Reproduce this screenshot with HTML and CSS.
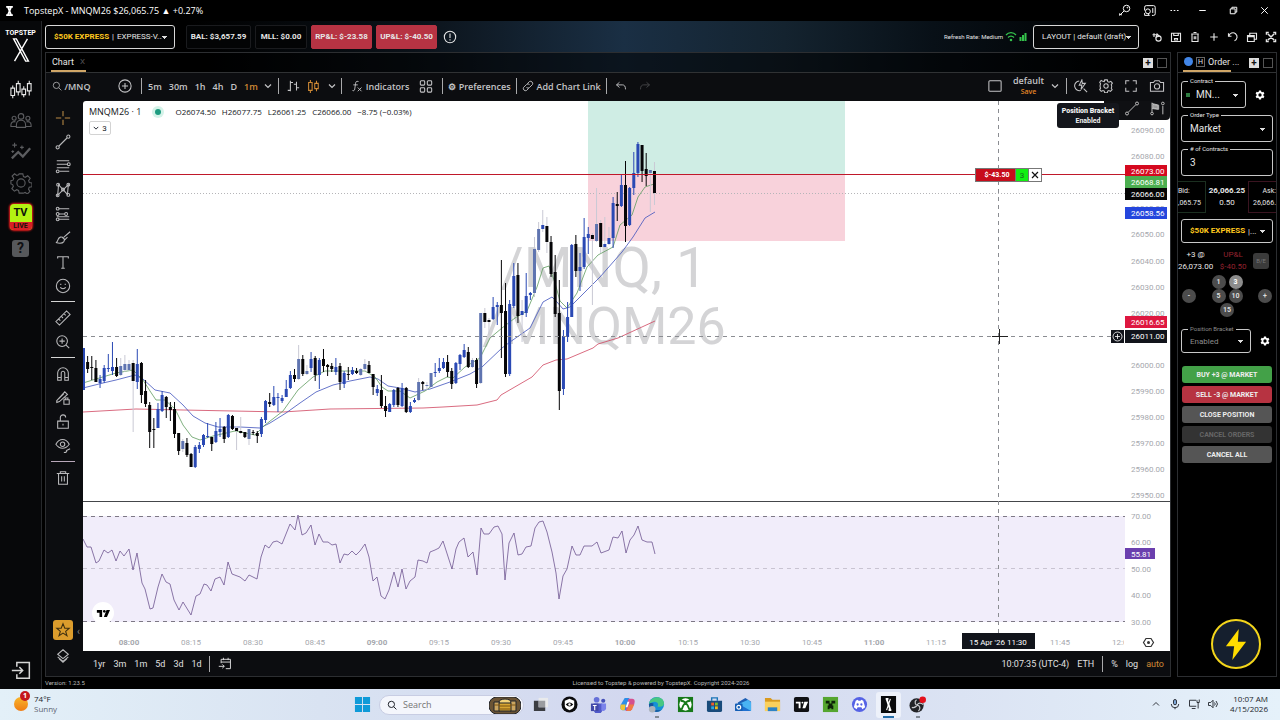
FILE: index.html
```html
<!DOCTYPE html>
<html lang="en">
<head>
    <meta charset="UTF-8">
    <meta name="viewport" content="width=device-width, initial-scale=1.0">
    <title>TopstepX - MNQM26</title>
    <link rel="stylesheet" href="styles.css">
</head>
<body>
    <header class="titlebar">
        <svg class="app-mark" viewBox="0 0 10 12"><path d="M1 1h8M1 11h8M3 1l4 10M7 1L3 11" stroke-width="2"/></svg>
        <span class="title">TopstepX - MNQM26 $26,065.75 ▲ +0.27%</span>
        <div class="window-buttons">
            <button aria-label="Passwords"><svg viewBox="0 0 16 16"><circle cx="10.500" cy="5.500" r="4"/><path d="M7.500 8.500L2 14v-2.500M4 12v2"/><circle cx="11.500" cy="4.500" r=".5"/></svg></button>
            <button aria-label="Side panel"><svg viewBox="0 0 16 16"><path d="M2 8V4a2 2 0 012-2h9a2 2 0 012 2v8a2 2 0 01-2 2h-2M12 5v6"/><circle cx="6" cy="9" r="3"/><path d="M2 11v3h6l-2-2"/></svg></button>
            <button aria-label="More"><svg viewBox="0 0 16 16"><path d="M3 8h2M7 8h2M11 8h2"/></svg></button>
            <button class="wide" aria-label="Minimize"><svg viewBox="0 0 16 16"><path d="M4 8h8"/></svg></button>
            <button class="wide" aria-label="Restore"><svg viewBox="0 0 16 16"><path d="M4 6h6v6H4zM6 6V4h6v6h-2"/></svg></button>
            <button class="wide" aria-label="Close"><svg viewBox="0 0 16 16"><path d="M4 4l8 8M12 4l-8 8"/></svg></button>
        </div>
    </header>

    <div class="app">
        <nav class="sidebar">
            <a class="logo" href="#">TOPSTEP
                <svg viewBox="0 0 18 26"><path d="M1 1h3l13 24h-3zM16 1L2 25"/></svg>
            </a>
            <a class="active" href="#" aria-label="Trade"><svg viewBox="0 0 24 24"><path d="M1 10h4v8H1zM3 7v3m0 8v3M7 5h4v9H7zM9 2v3m0 9v4M13 11h4v6h-4zM15 8v3m0 6v3M19 5h4v8h-4zM21 2v3m0 8v5"/></svg></a>
            <a href="#" aria-label="Community"><svg viewBox="0 0 24 24"><circle cx="12" cy="7" r="3"/><circle cx="4.500" cy="9" r="2.200"/><circle cx="19.500" cy="9" r="2.200"/><path d="M7 19v-3a5 5 0 0110 0v3zM7 18H1v-2a3.500 3.500 0 015-3M17 18h6v-2a3.500 3.500 0 00-5-3"/></svg></a>
            <a href="#" aria-label="Performance"><svg viewBox="0 0 24 24"><path d="M2 19l7-7 5 5 8-9" stroke-width="2.500"/><path d="M5 2v5M2.500 4.500h5M13 5v4M11 7h4M3 10v3M1.500 11.500h3"/></svg></a>
            <a href="#" aria-label="Settings"><svg viewBox="0 0 24 24"><circle cx="12" cy="12" r="4.500"/><path d="M10 2h4l.7 3 2 .8 2.600-1.700 2.700 2.700-1.700 2.600.8 2 2.900.6v4l-3 .7-.8 2 1.500 2.500-2.700 2.700-2.500-1.600-2 .8L14 23h-4l-.7-2.900-2-.8-2.500 1.600L2 18.300l1.700-2.600-.8-2L1 13V9.500l2.300-.6.8-2L2.300 4.500 5 2l2.300 1.800 2-.8z"/></svg></a>
            <a class="tv-live" href="#"><b>TV</b><small>LIVE</small></a>
            <a class="help" href="#" aria-label="Help"><span>?</span></a>
            <a class="logout" href="#" aria-label="Log out"><svg viewBox="0 0 24 24"><path d="M7 8V3h15v19H7v-5M1 12.500h13M10 8.500l4 4-4 4" stroke-width="1.800"/></svg></a>
        </nav>

        <div class="workspace">
            <div class="account-bar">
                <div class="picker account">
                    <label for="account">$50K EXPRESS</label><i>|</i>
                    <select id="account"><option>EXPRESS-V...</option></select>
                </div>
                <span class="stat balance">BAL: $3,657.59</span>
                <span class="stat limit">MLL: $0.00</span>
                <span class="stat loss">RP&amp;L: $-23.58</span>
                <span class="stat loss">UP&amp;L: $-40.50</span>
                <button class="icon-button" aria-label="Account info"><svg viewBox="0 0 16 16"><circle cx="8" cy="8" r="6.500"/><path d="M8 4v5M8 10.500v1.500"/></svg></button>
                <div class="bar-right">
                    <span class="refresh">Refresh Rate: Medium</span>
                    <svg class="signal" viewBox="0 0 22 12"><path d="M1 4a6.500 6.500 0 0110 0M3 6.500a4 4 0 016 0"/><circle cx="6" cy="9" r=".7"/><path d="M15.500 6v4M18 4v6M20.500 2v8" stroke-width="2"/></svg>
                    <div class="picker layout-picker">
                        <select aria-label="Layout"><option>LAYOUT | default (draft)</option></select>
                    </div>
                    <div class="layout-tools">
                        <button aria-label="Link"><svg viewBox="0 0 16 16"><path d="M4 3v5M2 5h5M8 4l3 3-4 1z"/><circle cx="10" cy="10" r="3.500"/></svg></button>
                        <button aria-label="Save"><svg viewBox="0 0 16 16"><path d="M2 3h12v11H2zM5 3v3h6V3M6 10h4v2H6z"/></svg></button>
                        <button aria-label="Delete"><svg viewBox="0 0 16 16"><path d="M3 4h10M6 2h4M4 4v10h8V4M7 7v4M9 7v4"/></svg></button>
                        <button aria-label="Add"><svg viewBox="0 0 16 16"><path d="M8 3v10M3 8h10"/></svg></button>
                        <button aria-label="Reset"><svg viewBox="0 0 16 16"><path d="M2 3v4h4M2.500 7A5.500 5.500 0 1110 13"/></svg></button>
                        <button aria-label="Windows"><svg viewBox="0 0 16 16"><path d="M2 6h9v8H2zM2 7.500h9M5 6V3h9v8h-3" /></svg></button>
                        <button aria-label="Expand"><svg viewBox="0 0 16 16"><path d="M2 5V2h3M11 2h3v3M14 11v3h-3M5 14H2v-3M4 4l8 8M12 4l-8 8" stroke-width="2"/></svg></button>
                    </div>
                </div>
            </div>

            <div class="panels">
                <main class="panel chart-panel">
                    <div class="tabs">
                        <button class="tab">Chart <span>X</span></button>
                        <button class="tab-add" aria-label="Add tab">+</button>
                        <button class="tab-max" aria-label="Maximize"></button>
                    </div>
                    <div class="toolbar">
                        <button class="symbol"><svg viewBox="0 0 16 16"><circle cx="7" cy="7" r="5"/><path d="M11 11l4 4"/></svg>/MNQ</button>
                        <button class="compare" aria-label="Compare"><svg viewBox="0 0 16 16"><circle cx="8" cy="8" r="7"/><path d="M8 4.500v7M4.500 8h7"/></svg></button>
                        <i class="sep"></i>
                        <div class="intervals">
                            <button>5m</button><button>30m</button><button>1h</button><button>4h</button><button>D</button><button class="on">1m</button>
                        </div>
                        <button class="chev" aria-label="Intervals"><svg viewBox="0 0 8 8"><path d="M1 2.500l3 3 3-3"/></svg></button>
                        <i class="sep"></i>
                        <button class="kind" aria-label="Bars"><svg viewBox="0 0 16 16"><path d="M5 2v12M2 13h3M5 4h3M12 3v10M9 6h3M12 10h3"/></svg></button>
                        <button class="kind on" aria-label="Candles"><svg viewBox="0 0 16 16"><path d="M3 4h4v9H3zM5 1v3M5 13v3M10 5h4v6h-4zM12 2v3M12 11v3"/></svg></button>
                        <button class="chev" aria-label="Chart types"><svg viewBox="0 0 8 8"><path d="M1 2.500l3 3 3-3"/></svg></button>
                        <i class="sep"></i>
                        <button class="fx"><svg viewBox="0 0 16 16"><path d="M10 2C7 1 6 3 6 5l-1 7c0 2-2 3-3 2M3 6.500h6M9 10l5 5M14 10l-5 5"/></svg>Indicators</button>
                        <button class="grid" aria-label="Templates"><svg viewBox="0 0 16 16"><rect x="1.500" y="2" width="5" height="5" rx="1"/><rect x="9.500" y="2" width="5" height="5" rx="1"/><rect x="1.500" y="10" width="5" height="5" rx="1"/><rect x="9.500" y="10" width="5" height="5" rx="1"/></svg></button>
                        <i class="sep"></i>
                        <button class="prefs">⚙ Preferences</button>
                        <i class="sep"></i>
                        <button class="link"><svg viewBox="0 0 16 16"><path d="M7 5l3-3a3 3 0 014 4l-4 4a3 3 0 01-4 0M9 11l-3 3a3 3 0 01-4-4l4-4a3 3 0 014 0"/></svg>Add Chart Link</button>
                        <i class="sep"></i>
                        <button class="history" aria-label="Undo"><svg viewBox="0 0 16 16"><path d="M6 3L2 6.500 6 10M2 6.500h8q4 0 4 6"/></svg></button>
                        <button class="history off" aria-label="Redo"><svg viewBox="0 0 16 16"><path d="M10 3l4 3.500-4 3.500M14 6.500H6q-4 0-4 6"/></svg></button>
                        <div class="toolbar-right">
                            <button class="box" aria-label="Layout"><svg viewBox="0 0 16 16"><rect x="1" y="2" width="14" height="12" rx="1"/></svg></button>
                            <button class="saved"><span>default</span><small>Save</small></button>
                            <button class="chev" aria-label="Layouts"><svg viewBox="0 0 8 8"><path d="M1 2.500l3 3 3-3"/></svg></button>
                            <i class="sep"></i>
                            <button aria-label="Quick search"><svg viewBox="0 0 16 16"><path d="M6 2.300A5.500 5.500 0 108 13M11 11l4 4M9 1L6 7h3l-1 5 5-7H9.500z"/></svg></button>
                            <button aria-label="Chart settings"><svg viewBox="0 0 16 16"><circle cx="8" cy="8" r="2.500"/><path d="M6.500 1h3l.5 2 1.500.7 2-1 1.800 2-1.300 1.800.5 1.500v1l-.5 1.500 1 1.700-1.900 2-1.800-1-1.300.6-.5 2h-3L6 13.800l-1.500-.6-2 1-1.700-2 1-1.800L1.300 9V7l.5-1.500-1-1.800 1.700-2 2 1L6 3z"/></svg></button>
                            <button aria-label="Fullscreen"><svg viewBox="0 0 16 16"><path d="M2 6V2h4M10 2h4v4M14 10v4h-4M6 14H2v-4"/></svg></button>
                            <button class="camera" aria-label="Snapshot"><svg viewBox="0 0 18 16"><path d="M1.500 4H5l1.500-2h5L13 4h3.500v10h-15z"/><circle cx="9" cy="8.500" r="3"/></svg></button>
                        </div>
                    </div>
                    <div class="chart-body">
                        <div class="draw-tools">
                            <button class="on" aria-label="Cross"><svg viewBox="0 0 18 18"><path d="M9 1v6M9 11v6M1 9h6M11 9h6"/></svg></button>
                            <button aria-label="Trend line"><svg viewBox="0 0 18 18"><circle cx="3" cy="15" r="1.800"/><circle cx="15" cy="3" r="1.800"/><path d="M4.500 13.500l9-9"/></svg></button>
                            <button aria-label="Fibonacci"><svg viewBox="0 0 18 18"><path d="M2 3h14M2 7h12M2 11h14M5 15h11"/><circle cx="15.500" cy="7" r="1.600"/><circle cx="3" cy="15" r="1.600"/></svg></button>
                            <button aria-label="Patterns"><svg viewBox="0 0 18 18"><path d="M3 15L4 3l10 11 1-11L4 14z"/><circle cx="3.500" cy="3" r="1.600"/><circle cx="15" cy="3" r="1.600"/><circle cx="3" cy="15" r="1.600"/><circle cx="15" cy="14.500" r="1.600"/><circle cx="9" cy="8.500" r="1.600"/></svg></button>
                            <button aria-label="Prediction"><svg viewBox="0 0 18 18"><path d="M4 3h12M4 9h7M2 12h14M4 15h12"/><circle cx="3" cy="3" r="1.600"/><circle cx="3" cy="9" r="1.600"/><circle cx="12.500" cy="9" r="1.600"/><circle cx="3" cy="15" r="1.600"/></svg></button>
                            <button aria-label="Brush"><svg viewBox="0 0 18 18"><path d="M1 14c3 0 1-5 5-6 3-.5 6 2 4 5-2 2.500-6 2-9 1zM10 8l7-6M8 8l3 3 3-3"/></svg></button>
                            <button aria-label="Text"><svg viewBox="0 0 18 18"><path d="M3 5V3h12v2M9 3v13M7 16h4"/></svg></button>
                            <button aria-label="Icons"><svg viewBox="0 0 18 18"><circle cx="9" cy="9" r="7.500"/><path d="M6 10.500c1 2 5 2 6 0M6.500 6.500v1.500M11.500 6.500v1.500"/></svg></button>
                            <i></i>
                            <button aria-label="Measure"><svg viewBox="0 0 18 18"><path d="M1 13L13 1l4 4L5 17zM4 10l2 2M7 7l2 2M10 4l2 2"/></svg></button>
                            <button aria-label="Zoom in"><svg viewBox="0 0 18 18"><circle cx="8" cy="8" r="6"/><path d="M12.500 12.500L16 16M8 5v6M5 8h6"/></svg></button>
                            <i></i>
                            <button aria-label="Magnet"><svg viewBox="0 0 18 18"><path d="M3 16V8a6 6 0 0112 0v8h-4V8a2 2 0 00-4 0v8zM3 13h4M11 13h4"/></svg></button>
                            <button aria-label="Stay in drawing mode"><svg viewBox="0 0 18 18"><path d="M2 12L11 2l3 3-9 8-3 1zM4 10l6-6M10 11h6v5h-6zM11.500 11V9h3v2"/></svg></button>
                            <button aria-label="Lock drawings"><svg viewBox="0 0 18 18"><path d="M3 8h12v8H3zM6 8V4a3 3 0 016 0M9 11v2"/></svg></button>
                            <button aria-label="Hide drawings"><svg viewBox="0 0 18 18"><path d="M1 7c4-7 11-7 15 0-4 6-11 6-15 0zM10 16c2 1 4-1 3-2l4-2"/><circle cx="8.500" cy="7" r="2.500"/></svg></button>
                            <i class="tinted"></i>
                            <button aria-label="Remove drawings"><svg viewBox="0 0 18 18"><path d="M2 4h14M6 4V2h6v2M4 4v12h10V4M7.500 7v6M10.500 7v6"/></svg></button>
                            <button class="star" aria-label="Favorites"><svg viewBox="0 0 18 18"><path d="M9 2l2 5h5l-4 3.500 1.500 5L9 12.500l-4.500 3 1.500-5L2 7h5z"/></svg></button>
                            <button aria-label="Object tree"><svg viewBox="0 0 18 18"><path d="M9 2l6 5-6 5-6-5zM3 10l6 5 6-5M4.500 12l4.500 4 4.500-4"/></svg></button>
                        </div>
                        <div class="chart-main">
                            <div class="plot">
                                <svg id="chart" viewBox="83 101 1087 550" preserveAspectRatio="xMinYMin meet"></svg>
                                <div class="legend">
                                    <strong>MNQM26 · 1</strong><i class="dot"></i>
                                    <span>O26074.50</span><span>H26077.75</span><span>L26061.25</span><span>C26066.00</span><span>−8.75 (−0.03%)</span>
                                </div>
                                <button class="count"><svg viewBox="0 0 8 8"><path d="M1 2.500l3 3 3-3"/></svg>3</button>
                                <div class="float-tools">
                                    <svg viewBox="0 0 18 18"><circle cx="3" cy="15" r="1.800"/><circle cx="15" cy="3" r="1.800"/><path d="M4.500 13.500l9-9"/></svg>
                                    <svg viewBox="0 0 18 18"><path d="M3 2v11M3 3l8 2v5l-8-1M16 6v10"/><path d="M4 4l6 1.500v4L4 8.500z" fill="#999"/><circle cx="3" cy="15" r="1.600"/><circle cx="16" cy="3" r="1.600"/></svg>
                                </div>
                                <div class="tooltip"><b>Position Bracket</b><span>Enabled</span></div>
                                <button class="collapse" aria-label="Collapse tools">‹</button>
                                <div class="tv-mark"><svg viewBox="0 0 16 10"><path d="M1 1h6v8H4V4H1zM12 1h4l-3.500 8H9z"/><circle cx="9.500" cy="2.500" r="1.500"/></svg></div>
                            </div>
                            <div class="range-bar">
                                <div class="ranges"><button>1yr</button><button>3m</button><button>1m</button><button>5d</button><button>3d</button><button>1d</button></div>
                                <i class="sep"></i>
                                <button class="goto" aria-label="Go to date"><svg viewBox="0 0 18 18"><path d="M4 8V3h12v12h-6M4 6.500h12M7 1v3M13 1v3M1 12h7M5.500 9.500L8 12l-2.500 2.500"/></svg></button>
                                <div class="range-right">
                                    <button>10:07:35 (UTC-4)</button><button>ETH</button><i class="sep"></i><button>%</button><button>log</button><button class="on">auto</button>
                                </div>
                            </div>
                        </div>
                    </div>
                </main>

                <aside class="panel order-panel">
                    <div class="tabs">
                        <button class="tab"><i class="ball"></i><i class="h">H</i>Order ...</button>
                        <button class="tab-add" aria-label="Add tab">+</button>
                        <button class="tab-max" aria-label="Maximize"></button>
                    </div>
                    <form class="order">
                        <div class="field-row">
                            <div class="field contract"><label for="contract">Contract</label><i class="live"></i><select id="contract"><option>MN...</option></select></div>
                            <button type="button" class="gear" aria-label="Contract settings"><svg viewBox="0 0 24 24"><use href="#cog"/></svg></button>
                        </div>
                        <div class="field"><label for="type">Order Type</label><select id="type"><option>Market</option></select></div>
                        <div class="field"><label for="qty"># of Contracts</label><input id="qty" type="text" value="3"></div>
                        <div class="quotes">
                            <div class="bid"><span>Bid:</span><span>,065.75</span></div>
                            <div class="last"><b>26,066.25</b><span>0.50</span></div>
                            <div class="ask"><span>Ask:</span><span>26,066.</span></div>
                        </div>
                        <div class="field order-account"><label for="acct2">$50K EXPRESS</label><select id="acct2"><option>|...</option></select></div>
                        <div class="position">
                            <div><span>+3 @</span><span>26,073.00</span></div>
                            <div class="neg"><span>UP&amp;L</span><span>$-40.50</span></div>
                            <button type="button" disabled>B/E</button>
                        </div>
                        <div class="sizes">
                            <button type="button">-</button>
                            <div><button type="button">1</button><button type="button" class="on">3</button><button type="button">5</button><button type="button">10</button><button type="button">15</button></div>
                            <button type="button">+</button>
                        </div>
                        <div class="field-row">
                            <div class="field bracket"><label for="bracket">Position Bracket</label><select id="bracket"><option>Enabled</option></select></div>
                            <button type="button" class="gear" aria-label="Bracket settings"><svg viewBox="0 0 24 24"><use href="#cog"/></svg></button>
                        </div>
                        <div class="actions">
                            <button type="button" class="buy">BUY +3 @ MARKET</button>
                            <button type="button" class="sell">SELL -3 @ MARKET</button>
                            <button type="button">CLOSE POSITION</button>
                            <button type="button" disabled>CANCEL ORDERS</button>
                            <button type="button">CANCEL ALL</button>
                        </div>
                    </form>
                    <button class="bolt" aria-label="Quick trade"><svg viewBox="0 0 24 36"><path d="M15 1L1 20h9L8 35l15-20h-9z"/></svg></button>
                </aside>
            </div>
            <footer class="app-footer"><span>Version: 1.23.5</span><span>Licensed to Topstep &amp; powered by TopstepX. Copyright 2024-2026</span><span></span></footer>
        </div>
    </div>

    <footer class="taskbar">
        <div class="weather">
            <div class="sun"><b>1</b></div>
            <p>74°F<br><span>Sunny</span></p>
        </div>
        <div class="dock">
            <a href="#" aria-label="Start"><svg viewBox="0 0 18 18"><path fill="#0f9ad8" d="M1 1h7.500v7.500H1zM9.500 1H17v7.500H9.500zM1 9.500h7.500V17H1zM9.500 9.500H17V17H9.500z"/></svg></a>
            <div class="search">
                <svg viewBox="0 0 16 16"><circle cx="7" cy="7" r="5"/><path d="M10.500 10.500L15 15"/></svg>
                <input type="text" placeholder="Search" aria-label="Search">
                <svg class="coins" viewBox="0 0 32 17"><rect width="32" height="17" rx="8" fill="#6b5434"/><path d="M5 5h6v9H5zM21 4h6v10h-6z" fill="#caa560"/><ellipse cx="16" cy="5" rx="6" ry="3" fill="#f3d37a"/><path d="M10 6h12v8H10z" fill="#d6a431"/><path d="M10 9h12M10 12h12M5 8h6M21 8h6" stroke="#7b5312"/></svg>
            </div>
            <a href="#" aria-label="Task view"><svg viewBox="0 0 18 18"><path fill="#e9eaec" d="M7 2h10v10H7z"/><path fill="#3b3d42" d="M2 5h5v7h7v4H2z"/><path fill="#9a9ca0" d="M7 5h7v7H7z"/></svg></a>
            <a href="#" aria-label="Security"><svg viewBox="0 0 18 18"><circle cx="9" cy="9" r="8.500" fill="#0b0b0d"/><path fill="#fff" d="M9 3l5 2v5c0 2-2 4-5 5-3-1-5-3-5-5V5z"/><path d="M5 9q4-4 8 0-4 4-8 0" fill="#0b0b0d"/><circle cx="9" cy="9" r="1.300" fill="#fff"/></svg></a>
            <a href="#" aria-label="Teams"><svg viewBox="0 0 18 18"><circle cx="7" cy="4" r="3" fill="#6670d8"/><circle cx="14" cy="5" r="2.200" fill="#4550b8"/><path d="M4 8h9v6a4 4 0 01-9 1z" fill="#5059c9"/><path d="M12 8h5v5a3 3 0 01-5 2z" fill="#7b83eb"/><path d="M1 8h8v8H1z" fill="#4148a8"/><path d="M3 10h4M5 10v5" stroke="#fff"/></svg></a>
            <a href="#" aria-label="Copilot"><svg viewBox="0 0 18 18"><path d="M6 2h5l-3 13H4c-3 0-3-3-2-6z" fill="#2b8ee8"/><path d="M2 9h5l-1 6H4c-3 0-3-3-2-6z" fill="#efc336"/><path d="M12 16H7l3-13h4c3 0 3 3 2 6z" fill="#d4508f"/><path d="M11 9h5l-2 5-2 2H8z" fill="#f07a45"/><path d="M9 6l-2 6h2l2-6z" fill="#fff"/></svg></a>
            <a class="running" href="#" aria-label="Edge"><svg viewBox="0 0 18 18"><circle cx="9" cy="9" r="8" fill="#1691d6"/><path d="M1 9C2-1 17-1 17 8c0 3-4 4-7 3 3-5-5-7-9-2z" fill="#48c783"/><path d="M6 8c-2 5 2 8 8 7-7 4-13 0-13-6 1-2 3-2 5-1z" fill="#16539b"/><circle cx="4.500" cy="14" r="3.500" fill="#aab2bb"/></svg></a>
            <a href="#" aria-label="Xbox"><svg viewBox="0 0 18 18"><path fill="#17791a" d="M1 1h16v16H1z"/><circle cx="9" cy="9" r="6.500" fill="#fff"/><path d="M5 14C6 10 9 7 9 7s3 3 4 7M4 5c3 0 5 2 5 2s2-2 5-2" fill="none" stroke="#17791a" stroke-width="2"/></svg></a>
            <a href="#" aria-label="Store"><svg viewBox="0 0 18 18"><path d="M6 5V2h6v3" fill="none" stroke="#1b76b7" stroke-width="1.500"/><path fill="#194b7b" d="M1 5h16v10q0 2-2 2H3q-2 0-2-2z"/><path fill="#f15b2a" d="M5.500 7h3v3h-3z"/><path fill="#80bb2d" d="M9.500 7h3v3h-3z"/><path fill="#28a8e0" d="M5.500 11h3v3h-3z"/><path fill="#f7bb16" d="M9.500 11h3v3h-3z"/></svg></a>
            <a href="#" aria-label="Outlook"><svg viewBox="0 0 18 18"><path fill="#1d5fb5" d="M3 7l8-5 6 4v9H4z"/><path fill="#49b3f3" d="M5 8l9-4 3 3v9H7z"/><path fill="#1e70d0" d="M5 9l12 7H5z"/><rect y="8" width="8" height="8" rx="1" fill="#145eb5"/><circle cx="4" cy="12" r="2" fill="none" stroke="#fff" stroke-width="1.300"/></svg></a>
            <a href="#" aria-label="Explorer"><svg viewBox="0 0 18 18"><path fill="#d99a20" d="M1 2h6l2 2h8v12H1z"/><path fill="#fbd05c" d="M1 6h16v10H1z"/><path fill="#2d83c6" d="M4 12h10v4H4z"/></svg></a>
            <a href="#" aria-label="TradingView"><svg viewBox="0 0 18 18"><rect x="1" y="1" width="16" height="16" rx="2" fill="#101114"/><path fill="#fff" d="M3 6h5v7H6V8H3zM12 6h4l-3 7h-3z"/><circle cx="10" cy="7" r="1" fill="#fff"/></svg></a>
            <a href="#" aria-label="Minecraft"><svg viewBox="0 0 18 18"><path fill="#55a630" d="M1 1h16v16H1z"/><path fill="#0c2108" d="M4 5h4v3H4zM10 5h4v3h-4zM7 8h4v2h1v4h-2v-1H8v1H6v-4h1z"/></svg></a>
            <a href="#" aria-label="Discord"><svg viewBox="0 0 18 18"><circle cx="9" cy="9" r="8" fill="#5562e5"/><path fill="#fff" d="M5 5l2-1 1 1h2l1-1 2 1 2 7-3 2-1-2H7l-1 2-3-2z"/><circle cx="7" cy="9" r="1.200" fill="#5562e5"/><circle cx="11" cy="9" r="1.200" fill="#5562e5"/></svg></a>
            <a class="current" href="#" aria-label="TopstepX"><svg viewBox="0 0 18 18"><path fill="#08090b" d="M1 0h16v18H1z"/><path stroke="#fff" stroke-width="2" d="M6 3h3M9 15h3M7 3l4 12"/><path stroke="#fff" d="M11 3L7 15"/></svg></a>
            <a class="running" href="#" aria-label="OBS"><svg viewBox="0 0 18 18"><circle cx="8" cy="10" r="7.500" fill="#222327"/><path d="M8 4c-3 2-1 6 1 6s4 3 1 6M3 12c3 1 5-1 6-3s4-2 6 0" fill="none" stroke="#c7c8cc" stroke-width="1.300"/><circle cx="14.500" cy="4" r="3.500" fill="#e4101c"/></svg></a>
        </div>
        <div class="tray">
            <svg viewBox="0 0 16 16"><path d="M4 10l4-4 4 4"/></svg>
            <svg viewBox="0 0 16 16"><rect x="6" y="2" width="4" height="7" rx="2" fill="#7fa8d8"/><path d="M3 8a5 5 0 0010 0M8 13v2"/></svg>
            <svg viewBox="0 0 16 16"><path d="M11 3H2v8h9M5 14h5M12 3v3h3V2M13.500 6v8"/></svg>
            <svg viewBox="0 0 16 16"><path d="M2 6h3l3-3v10l-3-3H2zM10 6q2 2 0 4M12 4q4 4 0 8"/></svg>
            <p>10:07 AM<br>4/15/2026</p>
        </div>
    </footer>

    <svg width="0" height="0" class="defs"><symbol id="cog" viewBox="0 0 24 24"><path fill-rule="evenodd" d="M9.500 1h5l.6 3.200 2 1.100 3-1.200 2.400 4.200-2.400 2.200v2.800l2.400 2.200-2.400 4.200-3-1.100-2 1.100-.6 3.300h-5l-.6-3.300-2-1.100-3 1.100-2.400-4.200 2.400-2.200v-2.800L1.500 8.300l2.400-4.200 3 1.200 2-1.100zM12 8a4 4 0 100 8 4 4 0 000-8z"/></symbol></svg>
    <script src="chart.js"></script>
</body>
</html>
```
FILE: styles.css
```css
* {
    box-sizing: border-box;
}
body {
    margin: 0;
    min-height: 100vh;
    display: flex;
    flex-direction: column;
    background: #000;
    color: #e6e6e6;
    font-family: Roboto, sans-serif;
    font-size: 8px;
}
button, select, input {
    font: inherit;
    color: inherit;
    background: none;
    border: 0;
    padding: 0;
    margin: 0;
}
button {
    cursor: pointer;
    white-space: nowrap;
}
a {
    color: inherit;
    text-decoration: none;
}
i {
    font-style: normal;
}
p {
    margin: 0;
}
svg {
    display: block;
    width: 14px;
    height: 14px;
    fill: none;
    stroke: currentColor;
    stroke-width: 1.2;
    flex: none;
}
svg.defs {
    width: 0;
    height: 0;
    position: absolute;
}
/* custom arrow for every drop-down */
select {
    appearance: none;
    flex: 1;
    min-width: 0;
    height: 16px;
    padding-right: 12px;
    background: linear-gradient(#ddd, #ddd) no-repeat right 7px top 7px / 5px 1px,
                linear-gradient(#ddd, #ddd) no-repeat right 8px top 8px / 3px 1px,
                linear-gradient(#ddd, #ddd) no-repeat right 9px top 9px / 1px 1px;
}
select option {
    background: #111;
}

/* window title */
.titlebar {
    height: 21px;
    display: flex;
    align-items: center;
    padding-left: 5px;
    font-family: "Open Sans", sans-serif;
    font-size: 9px;
    color: #fff;
}
.app-mark {
    width: 9px;
    height: 10px;
    margin-right: 10px;
}
.window-buttons {
    margin-left: auto;
    display: flex;
}
.window-buttons button {
    width: 25px;
    display: flex;
    justify-content: center;
}
.window-buttons .wide {
    width: 31px;
}
.window-buttons svg {
    width: 13px;
    height: 13px;
}

.app {
    flex: 1;
    display: flex;
}
.sidebar {
    width: 42px;
    background: #07080a;
    border-right: 1px solid #26282b;
    display: flex;
    flex-direction: column;
    align-items: center;
    gap: 1px;
    color: #5c5d60;
}
.sidebar a {
    height: 30px;
    display: flex;
    align-items: center;
    justify-content: center;
}
.sidebar a svg {
    width: 22px;
    height: 22px;
}
.sidebar .logo {
    height: 53px;
    padding-bottom: 6px;
    flex-direction: column;
    font-weight: bold;
    font-size: 7px;
    line-height: 10px;
    color: #fff;
}
.sidebar .logo svg {
    width: 18px;
    height: 24px;
    stroke-width: 1.5;
}
.sidebar .active {
    color: #e8e8e8;
}
.sidebar .tv-live {
    width: 22px;
    height: 26px;
    margin: 5px 0 2px;
    flex-direction: column;
    background: #b3f312;
    border-radius: 4px;
    box-shadow: 0 0 2px 1px #e41c1c;
    overflow: hidden;
    color: #10150a;
}
.tv-live b {
    font-size: 11px;
    line-height: 18px;
}
.tv-live small {
    width: 100%;
    background: #d81f26;
    font-size: 7px;
    line-height: 8px;
    text-align: center;
    font-weight: bold;
}
.help span {
    width: 17px;
    height: 17px;
    background: #56585b;
    border-radius: 3px;
    color: #101114;
    font: bold 14px/17px Roboto, sans-serif;
    text-align: center;
}
.sidebar .logout {
    margin-top: auto;
    margin-bottom: 4px;
    color: #d6d6d6;
}
.sidebar .logout svg {
    width: 20px;
    height: 20px;
}

.workspace {
    flex: 1;
    min-width: 0;
    display: flex;
    flex-direction: column;
    padding: 0 3px;
    background: linear-gradient(90deg, #000 12%, #0b1219 30%, #1a2f44 47%, #14232f 60%, #081017 72%, #000 88%);
}
.account-bar {
    height: 31px;
    display: flex;
    align-items: center;
    font-weight: bold;
}
.picker {
    display: flex;
    align-items: center;
    height: 24px;
    border: 1px solid #d8d8d8;
    border-radius: 3px;
    padding-left: 8px;
    background: #050607;
}
.account {
    width: 130px;
    margin-right: 11px;
    font-weight: normal;
}
.account label,
.order-account label {
    color: #ffc81f;
    font-weight: bold;
}
.account i {
    margin: 0 3px;
}
.stat {
    width: 61px;
    height: 24px;
    line-height: 22px;
    margin-right: 4px;
    border: 1px solid #1a1b1e;
    border-radius: 2px;
    background: #030405;
    text-align: center;
    white-space: nowrap;
}
.balance {
    width: 65px;
}
.limit {
    width: 52px;
}
.loss {
    background: #b73343;
    border-color: #b73343;
}
.icon-button {
    margin-left: 2px;
}
.bar-right {
    margin-left: auto;
    display: flex;
    align-items: center;
}
.refresh {
    font-size: 6px;
    font-weight: normal;
}
.signal {
    width: 22px;
    height: 12px;
    margin: 0 6px 0 2px;
    color: #35c34c;
}
.layout-picker {
    width: 106px;
    font-weight: normal;
}
.layout-tools {
    display: flex;
    gap: 7px;
    margin-left: 12px;
}
.layout-tools svg {
    width: 12px;
    height: 12px;
    stroke-width: 1.5;
}

.panels {
    flex: 1;
    display: flex;
    gap: 6px;
}
.panel {
    border: 1px solid #2c2e31;
    display: flex;
    flex-direction: column;
    min-width: 0;
    position: relative;
}
.chart-panel {
    flex: 1;
}
.order-panel {
    width: 100px;
    background: #000;
}
.tabs {
    height: 20px;
    display: flex;
    align-items: center;
    border-bottom: 1px solid #303234;
    background: rgba(0, 0, 0, .55);
    padding-right: 3px;
}
.tab {
    height: 19px;
    margin-left: 5px;
    border-bottom: 2px solid #d0a667;
    display: flex;
    align-items: center;
    gap: 6px;
    font-size: 9px;
    padding: 0 1px;
}
.tab span {
    color: #555;
    font-size: 8px;
}
.tab-add {
    margin-left: auto;
    width: 10px;
    height: 10px;
    background: #ddd;
    color: #111;
    font: bold 10px/10px Roboto, sans-serif;
}
.tab-max {
    width: 10px;
    height: 10px;
    border: 1px solid #555;
    margin-left: 4px;
}
.toolbar {
    height: 28px;
    padding-bottom: 2px;
    background: #0c0d10;
    display: flex;
    align-items: center;
    font-family: "Open Sans", sans-serif;
    font-weight: 600;
    font-size: 9px;
    color: #c4c4c6;
}
.toolbar button {
    display: flex;
    align-items: center;
    justify-content: center;
}
.sep {
    width: 1px;
    height: 16px;
    background: #a9a9ab;
}
.on {
    color: #d08a35;
}
.symbol {
    width: 54px;
    margin-right: 18px;
    gap: 3px;
    margin-left: -2px;
}
.toolbar .symbol svg {
    width: 10px;
    height: 10px;
}
.compare {
    width: 18px;
    margin-right: 7px;
}
.intervals {
    display: flex;
    gap: 7px;
    margin-left: 6px;
}
.chev {
    width: 20px;
}
.chev svg {
    width: 8px;
    height: 8px;
}
.kind {
    width: 20px;
}
.kind + .chev {
    width: 18px;
}
.sep + .kind {
    margin-left: 4px;
}
.fx {
    gap: 3px;
    margin: 0 10px 0 9px;
}
.fx svg,
.link svg {
    width: 12px;
    height: 12px;
}
.grid {
    margin-right: 9px;
}
.prefs {
    margin: 0 5px;
}
.link {
    margin: 0 5px;
    gap: 3px;
}
.history {
    margin-left: 8px;
}
.history svg {
    width: 12px;
    height: 12px;
}
.off {
    color: #47484b;
    margin-left: 12px;
}
.toolbar-right {
    margin-left: auto;
    display: flex;
    align-items: center;
    gap: 11px;
    padding-right: 5px;
}
.toolbar-right .chev {
    width: 16px;
    margin: 0 -8px;
}
.toolbar-right .sep {
    margin-right: -4px;
}
.toolbar .saved {
    flex-direction: column;
    line-height: 12px;
}
.saved small {
    font-size: 7px;
    line-height: 10px;
    color: #e28426;
}
.camera svg {
    width: 16px;
}

.chart-body {
    flex: 1;
    display: flex;
    background: #0c0d10;
}
.draw-tools {
    width: 37px;
    display: flex;
    flex-direction: column;
    align-items: center;
    padding: 5px 3px 8px 0;
    color: #b9b9bb;
}
.draw-tools button {
    height: 24px;
    display: flex;
    align-items: center;
}
.draw-tools svg {
    width: 16px;
    height: 16px;
}
.draw-tools i {
    width: 24px;
    height: 1px;
    background: #d5d5d5;
    margin: 3px 0 4px;
}
.draw-tools .tinted {
    background: #b9a8ba;
}
.draw-tools .on {
    color: #b98a45;
}
.draw-tools .star {
    width: 20px;
    height: 20px;
    margin: auto 0 4px;
    justify-content: center;
    border-radius: 3px;
    background: #dc9c2c;
    color: #403010;
}
.chart-main {
    flex: 1;
    min-width: 0;
    display: flex;
    flex-direction: column;
}
.plot {
    flex: 1;
    position: relative;
    background: #fff;
    border-top-left-radius: 3px;
    color: #131722;
}
#chart {
    width: 100%;
    height: auto;
    stroke: none;
    font-family: Roboto, sans-serif;
    font-size: 8px;
}
.legend {
    position: absolute;
    top: 5px;
    left: 6px;
    display: flex;
    align-items: center;
    gap: 6px;
    font: 8px/12px "Open Sans", sans-serif;
}
.legend strong {
    font-size: 9px;
    font-weight: normal;
}
.dot {
    width: 6px;
    height: 6px;
    margin: 0 8px;
    border-radius: 50%;
    background: #1e9c80;
    box-shadow: 0 0 0 3px #d5f3e9;
}
.count {
    position: absolute;
    top: 20px;
    left: 6px;
    width: 22px;
    height: 14px;
    display: flex;
    align-items: center;
    justify-content: center;
    gap: 3px;
    border: 1px solid #d3d3d3;
    border-radius: 2px;
    background: #fff;
    font: 8px Roboto, sans-serif;
}
.count svg {
    width: 6px;
    height: 6px;
}
.float-tools {
    position: absolute;
    top: 0;
    right: 0;
    width: 66px;
    height: 19px;
    padding-right: 5px;
    display: flex;
    justify-content: flex-end;
    gap: 9px;
    background: #0f1013;
    border-bottom-right-radius: 4px;
    color: #bbb;
}
.float-tools svg {
    width: 16px;
    height: 15px;
}
.tooltip {
    position: absolute;
    top: 2px;
    right: 51px;
    width: 62px;
    height: 25px;
    padding-top: 3px;
    display: flex;
    flex-direction: column;
    align-items: center;
    border-radius: 3px;
    background: #14161c;
    color: #f0f0f0;
    font-weight: bold;
    font-size: 7px;
    line-height: 10px;
}
.collapse {
    position: absolute;
    left: -6px;
    bottom: 14px;
    color: #888;
    font-size: 10px;
}
.tv-mark {
    position: absolute;
    left: 9px;
    bottom: 27px;
    width: 22px;
    height: 22px;
    display: flex;
    align-items: center;
    justify-content: center;
    border-radius: 50%;
    background: #fff;
}
.tv-mark svg {
    height: 9px;
    fill: #000;
    stroke: none;
}
.range-bar {
    height: 25px;
    display: flex;
    align-items: center;
    padding: 1px 6px 0 10px;
    font: 9px Roboto, sans-serif;
    color: #e0e0e0;
}
.ranges {
    display: flex;
    gap: 8px;
    margin-right: 7px;
}
.goto {
    margin-left: 8px;
}
.range-right {
    margin-left: auto;
    display: flex;
    align-items: center;
    gap: 8px;
}

/* order ticket */
.order-panel .tab {
    width: 48px;
    gap: 3px;
}
.order-panel .tab-add {
    flex: none;
}
.order-panel .tab-max {
    flex: none;
}
.ball {
    flex: none;
    width: 9px;
    height: 9px;
    border-radius: 50%;
    background: #4286e8;
}
.h {
    border: 1px solid #666;
    font-size: 7px;
    line-height: 8px;
    padding: 0 1px;
}
.order {
    padding: 8px 3px 0;
    display: flex;
    flex-direction: column;
}
.field-row {
    display: flex;
    gap: 9px;
}
.field {
    position: relative;
    height: 27px;
    display: flex;
    align-items: center;
    padding-left: 8px;
    margin-bottom: 7px;
    border: 1px solid #c8c8c8;
    border-radius: 3px;
    font-size: 10px;
}
.field > label {
    position: absolute;
    top: -6px;
    left: 6px;
    padding: 0 2px;
    background: #000;
    font-size: 6px;
    line-height: 10px;
}
.field input {
    width: 100%;
}
.contract {
    width: 65px;
    padding-left: 4px;
    gap: 6px;
}
.live {
    width: 4px;
    height: 4px;
    background: #2f7d42;
}
.gear {
    height: 27px;
}
.gear svg {
    width: 10px;
    height: 10px;
    fill: #fff;
    stroke: none;
}
.quotes {
    display: flex;
    justify-content: space-between;
    height: 32px;
    margin: -2px -3px 6px;
    font-size: 8px;
    line-height: 12px;
}
.quotes div {
    display: flex;
    flex-direction: column;
    padding-top: 3px;
}
.quotes .bid {
    width: 28px;
    align-items: flex-start;
    border: 1px solid #1b2f20;
    border-left: 0;
    font-size: 7px;
}
.quotes .last {
    align-items: center;
    padding-top: 4px;
}
.quotes .ask {
    width: 28px;
    align-items: flex-end;
    border: 1px solid #3a1420;
    border-right: 0;
    font-size: 7px;
}
.order-account {
    height: 24px;
    font-size: 8px;
}
.order-account > label {
    position: static;
    padding: 0 3px 0 0;
    font-size: 8px;
}
.position {
    display: flex;
    justify-content: space-between;
    align-items: center;
    margin: -1px 4px 0 -3px;
    font-size: 8px;
    line-height: 12px;
}
.position div {
    display: flex;
    flex-direction: column;
    align-items: center;
}
.neg {
    color: #94222f;
}
.position button {
    width: 16px;
    height: 16px;
    border-radius: 3px;
    background: #3b3b3b;
    color: #777;
    font-size: 6px;
}
.sizes {
    display: flex;
    align-items: center;
    justify-content: space-between;
    margin: 2px 1px 12px;
}
.sizes div {
    width: 40px;
    display: flex;
    flex-wrap: wrap;
    justify-content: center;
    column-gap: 3px;
}
.sizes button {
    width: 14px;
    height: 14px;
    border-radius: 50%;
    background: #4c4c4c;
    color: #ddd;
    font-size: 7px;
    font-weight: bold;
}
.sizes .on {
    background: #8c8c8c;
    color: #fff;
}
.bracket {
    width: 70px;
    height: 24px;
    font-size: 8px;
    color: #8c8c8c;
    margin-bottom: 13px;
}
.bracket + .gear {
    height: 24px;
}
.actions {
    display: flex;
    flex-direction: column;
    gap: 3px;
    padding: 0 1px;
}
.actions button {
    height: 17px;
    border-radius: 3px;
    background: #555;
    color: #eee;
    font-weight: bold;
    font-size: 7px;
}
.actions .buy {
    background: #43a148;
}
.actions .sell {
    background: #b73341;
}
.actions button:disabled {
    background: #333;
    color: #666;
}
.bolt {
    position: absolute;
    right: 15px;
    bottom: 7px;
    width: 50px;
    height: 50px;
    display: flex;
    align-items: center;
    justify-content: center;
    border: 2px solid #f3d51b;
    border-radius: 50%;
    background: #151f2e;
}
.bolt svg {
    width: 22px;
    height: 33px;
    fill: #ffdc00;
    stroke: none;
}
.app-footer {
    height: 12px;
    display: grid;
    grid-template-columns: 1fr auto 1fr;
    margin: 0 -3px;
    padding: 0 3px;
    background: #000;
    font-size: 6px;
    line-height: 12px;
    color: #bbb;
}

/* desktop taskbar */
.taskbar {
    height: 32px;
    display: grid;
    grid-template-columns: 1fr auto 1fr;
    align-items: center;
    background: linear-gradient(90deg, #e3f0f8, #d9e3f2 25%, #d2d7ef 50%, #dbe3f3 75%, #e5f1fa);
    color: #20242b;
    font: 8px/10px "Open Sans", sans-serif;
}
.weather {
    display: flex;
    align-items: center;
    gap: 6px;
    padding: 0 0 2px 14px;
}
.weather span {
    color: #5c6470;
}
.sun {
    position: relative;
    width: 14px;
    height: 14px;
    border-radius: 50%;
    background: linear-gradient(#f8b62c, #ef7c13);
}
.sun b {
    position: absolute;
    top: -6px;
    left: 6px;
    width: 10px;
    height: 10px;
    border-radius: 50%;
    background: #c4161d;
    color: #fff;
    font-size: 7px;
    text-align: center;
}
.dock {
    display: flex;
    align-items: center;
}
.dock a {
    width: 25px;
    height: 26px;
    margin: 0 2px;
    display: flex;
    align-items: center;
    justify-content: center;
    border-radius: 3px;
    border-bottom: 2px solid transparent;
}
.dock a svg {
    width: 17px;
    height: 17px;
    stroke: none;
}
.dock .running {
    border-image: linear-gradient(90deg, transparent 45%, #828a95 45%, #828a95 60%, transparent 60%) 2;
}
.dock .current {
    background: #edf1fa;
    border-image: linear-gradient(90deg, transparent 30%, #226ca8 30%, #226ca8 70%, transparent 70%) 2;
}
.search {
    display: flex;
    align-items: center;
    width: 145px;
    height: 20px;
    margin: 0 2px;
    padding: 0 2px 0 7px;
    border-radius: 10px;
    background: #f4f6fc;
    border: 1px solid #c8cde3;
}
.search input {
    flex: 1;
    min-width: 0;
    padding-left: 6px;
    font-size: 9px;
    outline: 0;
}
.search svg {
    width: 10px;
    height: 10px;
    stroke-width: 1.600;
}
.search .coins {
    width: 32px;
    height: 17px;
    stroke-width: 1;
}
.tray {
    display: flex;
    align-items: center;
    justify-content: flex-end;
    gap: 7px;
    padding: 0 12px 2px 0;
    text-align: right;
}
.tray svg {
    width: 12px;
    height: 12px;
}
.tray p {
    margin-left: 4px;
}
```
FILE: chart.js
```js
// one entry a minute from 07:49: high, body top, body bottom, low, colour
// k = down, b = up, g = faded
const candles = `348 348 390 390 b|356 362 369 373 k|356 367 368 380 k|360 368 382 382 k|375 379 383 388 b|365 368 381 383 b|354 368 369 372 b|342 367 371 375 b|358 367 376 377 k|358 366 375 376 g
355 364 370 372 g|360 364 370 371 g|360 363 381 432 kg|349 364 382 389 b|362 363 395 403 k|380 391 404 407 k|402 405 432 448 k|418 429 430 448 k|403 409 428 428 b|391 395 411 412 b
396 397 407 418 k|402 407 410 421 k|402 409 434 438 k|433 433 451 455 k|439 441 449 452 g|438 443 455 457 k|453 454 467 467 k|445 447 467 468 b|442 445 449 453 b|434 435 445 447 b
423 436 437 438 b|437 437 444 451 k|422 431 442 443 b|418 429 432 437 b|426 427 439 443 k|414 415 437 438 b|415 416 429 430 k|426 428 431 450 kg|417 431 433 434 kg|432 432 437 438 k
429 429 439 445 g|430 432 433 435 k|431 433 436 443 k|417 419 434 437 b|400 401 420 423 b|393 402 404 407 k|386 397 405 406 b|393 397 398 412 b|395 398 401 403 b|380 389 397 397 b
371 375 388 389 b|369 375 379 382 k|345 359 379 380 g|355 359 374 376 k|365 371 374 375 g|352 359 368 372 b|356 358 375 381 k|358 360 375 389 b|349 359 366 372 k|364 365 367 376 k
363 366 369 372 k|358 367 372 375 b|363 366 382 390 k|371 373 384 388 b|367 374 375 380 k|367 370 374 375 b|368 371 373 374 k|368 369 375 376 g|359 364 369 371 g|361 365 373 373 k
374 374 387 395 k|385 389 393 396 b|375 390 406 408 k|396 406 411 417 k|403 404 412 412 b|389 390 405 407 b|387 388 405 407 k|383 388 406 407 b|387 388 412 413 k|402 406 412 413 b
398 400 402 403 b|378 382 400 401 g|381 382 384 390 k|382 385 386 390 g|373 373 387 387 g|363 372 373 377 b|358 368 371 373 b|358 362 368 369 b|355 362 372 377 k|368 371 384 389 k
362 363 383 384 b|354 355 364 370 b|344 350 357 358 b|347 352 367 368 k|358 360 367 368 g|358 360 384 388 k|313 313 383 384 g|308 313 322 328 kg|318 320 322 335 kg|297 307 319 320 b
302 305 307 325 b|260 305 313 358 k|283 311 374 377 k|300 304 374 376 b|263 276 306 308 b|263 275 316 323 k|300 311 315 342 bg|273 296 313 317 b|292 293 295 300 b|237 249 293 297 g
222 229 250 252 g|210 225 229 232 bg|217 226 242 253 kg|236 242 274 277 k|255 272 314 317 k|280 313 391 410 k|330 336 389 395 b|302 317 337 342 b|244 245 317 317 b|235 244 271 277 k
253 267 271 291 b|218 237 267 269 b|227 234 238 254 b|233 235 239 305 kg|188 224 241 242 g|220 223 247 253 kg|217 244 247 248 bg|227 238 244 245 bg|197 203 238 248 b|192 204 206 221 k
175 185 206 207 b|161 185 226 242 k|187 188 225 226 b|152 173 188 195 b|142 144 173 177 b|145 145 171 182 k|153 169 176 186 k|170 170 173 212 g|162 171 193 205 kg`;

const slow = '83,412 136,409 183,410 283,412 330,409 423,408 443,407 477,405 497,400 501,395 532,377 543,365 556,360 567,359 593,348 598,344 618,338 655,321';
const mid = '83,388 103,383 116,380 135,375 143,379 155,390 170,393 183,405 193,416 205,423 218,427 240,427 260,428 270,423 286,413 300,403 316,392 333,385 350,381 370,377 378,379 388,386 400,388 415,392 430,389 450,382 470,374 482,367 502,348 510,342 530,328 543,302 552,297 557,302 563,309 570,307 580,297 600,277 622,252 633,237 645,218 655,212';
const fast = '83,383 96,379 116,373 133,370 143,380 150,391 156,400 165,400 175,409 183,425 192,437 200,440 213,436 235,431 255,435 265,425 283,411 298,390 313,377 325,371 345,371 365,371 375,377 382,387 388,391 400,391 410,398 425,391 437,382 447,377 453,378 465,367 480,358 490,338 502,328 515,318 527,311 537,287 543,268 549,266 555,283 560,301 567,308 577,293 587,267 598,255 613,247 620,225 632,215 638,197 645,187 654,184';
const rsi = '83,539 87,547 91,547 96,563 99,561 104,550 108,553 112,550 116,561 120,551 124,556 129,549 133,570 137,553 142,583 145,589 150,609 153,608 158,587 162,574 166,582 170,584 174,600 179,610 183,602 191,615 196,596 200,594 204,584 207,585 211,591 215,579 220,577 224,585 228,562 232,574 240,577 245,581 249,575 257,579 261,557 265,545 269,548 273,542 277,541 282,544 290,524 295,530 298,515 302,535 306,533 311,525 315,545 319,534 323,542 328,542 332,545 336,544 340,563 344,554 348,555 352,551 356,555 360,551 365,544 369,557 373,581 377,577 381,596 385,599 389,590 394,572 398,587 402,569 406,589 410,581 415,577 418,560 423,561 427,563 430,552 435,550 439,548 443,541 452,569 456,549 459,542 464,538 468,557 473,552 477,575 481,528 484,534 489,534 494,527 498,526 502,534 505,580 509,543 514,533 518,555 522,554 526,547 531,546 535,528 539,522 543,521 547,532 552,552 556,573 559,599 563,576 567,569 572,546 576,555 580,555 584,546 592,546 597,542 601,553 609,550 613,537 618,538 622,531 626,553 630,540 634,535 638,526 642,540 647,542 652,542 655,554';

const out = [];
const rect = (x, y, w, h, fill) => out.push(`<rect x="${x}" y="${y}" width="${w}" height="${h}" fill="${fill}"/>`);
const line = (x1, y1, x2, y2, color, dash = 'none') => out.push(`<path d="M${x1} ${y1}L${x2} ${y2}" stroke="${color}" stroke-dasharray="${dash}" stroke-width="1"/>`);
const text = (x, y, str, fill, extra = '') => out.push(`<text x="${x}" y="${y}" fill="${fill}" ${extra}>${str}</text>`);
const curve = (points, color) => out.push(`<polyline points="${points}" fill="none" stroke="${color}" stroke-width="0.8"/>`);

// watermark
text(604, 287, '/MNQ, 1', '#d4d4d6', 'font-size="56" text-anchor="middle"');
text(604, 344, '/MNQM26', '#d4d4d6', 'font-size="52" text-anchor="middle"');

// target and stop zones
rect(588, 101, 257, 73, '#cfede4');
rect(588, 174, 257, 67, '#f8d2db');

// RSI pane
rect(83, 516, 1042, 106, '#f1edfa');
line(83, 501.5, 1171, 501.5, '#44464a');
line(83, 516.5, 1125, 516.5, '#7d7885', '4 4');
line(83, 568.5, 1125, 568.5, '#c9c4d2', '4 4');
line(83, 621.5, 1125, 621.5, '#7d7885', '4 4');
curve(rsi, '#6f5590');

line(83, 193.5, 1125, 193.5, '#b5b5b8', '1 2');
curve(slow, '#cf4560');
curve(mid, '#3f52bd');
curve(fast, '#5f9c60');

const body = { k: '#050507', b: '#2a49b4', g: '#5f74b0' };
candles.split(/[|\n]/).forEach((row, i) => {
    const [high, top, bottom, low, kind] = row.split(' ');
    const x = 83.5 + i * 4.1375;
    const faded = kind.endsWith('g');
    line(x, high, x, low, faded ? '#c9c9d4' : body[kind]);
    rect(x - 1.5, top, 3, Math.max(bottom - top, 1), body[kind[0]]);
});
line(83, 174.5, 1125, 174.5, '#c0182a');

// crosshair
line(83, 336.5, 1111, 336.5, '#8b8d92', '4 4');
line(998.5, 101, 998.5, 633, '#8b8d92', '4 4');
line(992, 336.5, 1008, 336.5, '#222');
line(999.5, 329, 999.5, 344, '#222');

// open position
rect(975, 168, 67, 14, '#777');
rect(976, 169, 39, 12, '#c70d1b');
rect(1016, 169, 12, 12, '#12f012');
rect(1029, 169, 12, 12, '#fff');
text(997, 177, '$-43.50', '#fff', 'font-weight="bold" font-size="7" text-anchor="middle"');
text(1022, 178, '3', '#17691d', 'text-anchor="middle"');
out.push('<path d="M1032 172l6 6M1038 172l-6 6" stroke="#111"/>');

// price scale
for (let price = 26090, y = 133; price >= 25950; price -= 10, y += 26.1) {
    if (price !== 26070 && price !== 26010) text(1131, Math.round(y), price + '.00', '#a5a7ad');
}
[70, 60, 50, 40, 30].forEach((v, i) => text(1131, 519 + Math.round(i * 26.4), v + '.00', '#a5a7ad'));
const tags = [
    [165, '26073.00', '#d5091f'], [176, '26068.81', '#4caf50'], [188, '26066.00', '#050505'],
    [207, '26058.56', '#2546dd'], [316, '26016.65', '#de1740'], [330, '26011.00', '#11141b']
];
tags.forEach(([y, label, fill]) => {
    const tall = label === '26011.00';
    rect(1125, y, 42, tall ? 13 : 12, fill);
    text(1131, y + 9, label, '#fff');
});
rect(1125, 548, 30, 11, '#6b3fae');
text(1131, 557, '55.81', '#fff');
rect(1111, 330, 13, 13, '#11141b');
out.push('<circle cx="1117.5" cy="336.500" r="4.500" stroke="#fff" fill="none" stroke-width="0.8"/><path d="M1115 336.500h5M1117.500 334v5" stroke="#fff" stroke-width="0.8"/>');

// time scale
for (let i = 0; i < 17; i++) {
    const label = String(8 + Math.floor(i / 4)).padStart(2, '0') + ':' + String(i % 4 * 15).padStart(2, '0');
    const x = Math.round(129 + i * 62.06);
    if (i === 14) continue;
    if (i === 16) text(1112, 645, '12:0', '#a5a7ad');
    else text(x, 645, label, '#a5a7ad', `text-anchor="middle" font-weight="${i % 4 ? 400 : 700}"`);
}
rect(1124, 634, 12, 16, '#fff');
rect(962, 633, 73, 16, '#11141b');
text(998, 645, "15 Apr '26  11:30", '#fff', 'text-anchor="middle"');
out.push('<path d="M1146 638.500h5l2.500 4-2.500 4h-5l-2.500-4z" stroke="#333" fill="none"/><circle cx="1148.500" cy="642.500" r="1.500" fill="#333"/>');

document.getElementById('chart').innerHTML = out.join('');
```
